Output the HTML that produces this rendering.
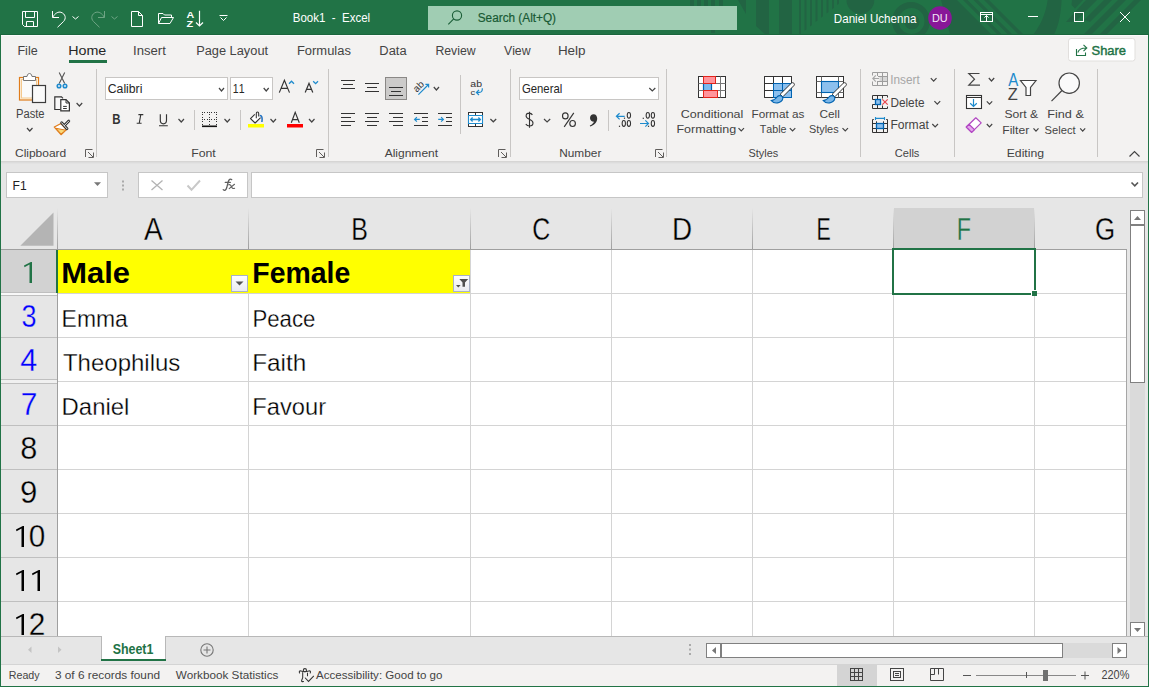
<!DOCTYPE html>
<html><head><meta charset="utf-8"><style>
html,body{margin:0;padding:0;width:1149px;height:687px;overflow:hidden;background:#f3f2f1;}
svg{display:block;}
text{font-family:"Liberation Sans",sans-serif;font-kerning:none;}
</style></head><body>
<svg width="1149" height="687" viewBox="0 0 1149 687">
<defs>
<linearGradient id="hsep" x1="0" y1="0" x2="0" y2="1"><stop offset="0" stop-color="#e6e6e6"/><stop offset="1" stop-color="#9f9f9f"/></linearGradient>
<linearGradient id="btn" x1="0" y1="0" x2="0" y2="1"><stop offset="0" stop-color="#ffffff"/><stop offset="1" stop-color="#e8eaf0"/></linearGradient>
</defs>
<rect x="0" y="0" width="1149" height="687" fill="#f3f2f1" />
<rect x="0" y="0" width="1149" height="35" fill="#217346" />
<rect x="0" y="35" width="1149" height="1" fill="#fbfbfb" />
<clipPath id="tb"><rect x="0" y="0" width="1149" height="34"/></clipPath>
<g fill="#226443" clip-path="url(#tb)">
<polygon points="738,0 746,0 746,14"/>
<polygon points="756,0 769,0 769,35 766,35 756,26"/>
<rect x="779" y="0" width="13" height="35" fill="#226443" />
<polygon points="799,0 801,0 801,33.5 799,35.0"/>
<polygon points="804.5,0 806.5,0 806.5,29.2 804.5,30.7"/>
<polygon points="810,0 812,0 812,24.9 810,26.4"/>
<polygon points="815.5,0 817.5,0 817.5,20.6 815.5,22.1"/>
<polygon points="821,0 823,0 823,16.3 821,17.8"/>
<polygon points="826.5,0 828.5,0 828.5,12.0 826.5,13.5"/>
<polygon points="832,0 834,0 834,7.700000000000003 832,9.200000000000003"/>
<polygon points="837,0 839,0 839,3.400000000000002 837,4.900000000000002"/>
<path d="M846.5,0 A13.8,13.8 0 0 0 874.3,0 Z"/>
<path d="M892,21 A19,19 0 1 1 930,21 A19,19 0 1 1 892,21 Z M898.5,21 A13,13 0 1 0 924.5,21 A13,13 0 1 0 898.5,21 Z" fill-rule="evenodd"/>
<circle cx="912" cy="22" r="7.5"/>
<polygon points="941,0 957,0 991,34 950,34"/>
<polygon points="963,0 967.5,0 1001.5,34 997,34"/>
<polygon points="973.5,0 978.0,0 1012.0,34 1007.5,34"/>
<polygon points="984,0 989,0 1023,34 1018,34"/>
<path d="M1047.6,0 H1061.6 C1061,14 1058.5,26 1053.8,35 H1033 C1040,26 1046,14 1047.6,0 Z"/>
<polygon points="1072,0 1083,0 1075,8.5 1071.5,5"/>
<polygon points="1086,0 1097,0 1077,20 1072,22 1066,22"/>
<polygon points="1104,0 1112,0 1090,22 1085,20 1083,21"/>
<polygon points="1118,0 1126,0 1092,34 1084,34"/>
<polygon points="1134,0 1141,0 1107,34 1100,34"/>
<rect x="690" y="0" width="4" height="6" fill="#226443" />
<rect x="697" y="0" width="4" height="6" fill="#226443" />
<rect x="704" y="0" width="4" height="6" fill="#226443" />
<rect x="711" y="0" width="4" height="6" fill="#226443" />
<rect x="719" y="0" width="4" height="6" fill="#226443" />
<rect x="711" y="29" width="4" height="4" fill="#226443" />
</g>
<rect x="0" y="34" width="1149" height="1" fill="#1b663d" />
<rect x="428" y="6" width="309" height="24" fill="#a0cdb3" />
<circle cx="457" cy="15.5" r="4.6" fill="none" stroke="#1b5e38" stroke-width="1.1"/>
<line x1="453.7" y1="18.8" x2="448.3" y2="24.3" stroke="#1b5e38" stroke-width="1.1"/>
<text x="477.76" y="21.8" font-size="12.65" fill="#185a34" textLength="78.27" lengthAdjust="spacingAndGlyphs" stroke="#185a34" stroke-width="0.2">Search (Alt+Q)</text>
<text x="292.76" y="21.8" font-size="12.65" fill="#ffffff" textLength="77.41" lengthAdjust="spacingAndGlyphs" >Book1  -  Excel</text>
<text x="833.80" y="22.9" font-size="12.35" fill="#ffffff" textLength="82.55" lengthAdjust="spacingAndGlyphs" >Daniel Uchenna</text>
<circle cx="940" cy="18" r="11.8" fill="#881798"/>
<text x="931.91" y="21.7" font-size="10.76" fill="#f3e6f5" textLength="15.73" lengthAdjust="spacingAndGlyphs" >DU</text>
<g fill="none" stroke="#ffffff" stroke-width="1">
<path d="M22.5,11.5 H37.5 V26.5 H24.5 L22.5,24.5 Z"/>
<path d="M25.5,11.5 V17.5 H34.5 V11.5"/>
<path d="M26.5,26.5 V21.5 H33.5 V26.5"/>
<path d="M52.5,11 V17.5 H59"/>
<path d="M52.8,17.2 C55,13 58.5,11.5 61,12.3 C65.5,13.8 66.5,18.5 63.5,21.5 L57.5,27.3"/>
<path d="M72.5,16.5 L75.5,19 L78.5,16.5"/>
</g>
<g fill="none" stroke="#6fa585" stroke-width="1">
<path d="M104.5,11 V17.5 H98"/>
<path d="M104.2,17.2 C102,13 98.5,11.5 96,12.3 C91.5,13.8 90.5,18.5 93.5,21.5 L99.5,27.3"/>
<path d="M111.5,16.5 L114.5,19 L117.5,16.5"/>
</g>
<g fill="none" stroke="#ffffff" stroke-width="1">
<path d="M131.5,11.5 H138.5 L142.5,15.5 V26.5 H131.5 Z M138.5,11.5 V15.5 H142.5"/>
<path d="M158.5,23.5 V13.5 H163 L164.5,15 H171.5 V17.5 M158.5,23.5 H170 L173.5,17.5 H161.5 L158.5,23.5"/>
<path d="M199.5,10.8 V26 M196,22.5 L199.5,26 L203,22.5" stroke-width="1.2"/>
<path d="M219.5,15.5 H227.5 M220.5,17.5 L223.5,20.5 L226.5,17.5"/>
</g>
<text x="186.53" y="17.6" font-size="8.43" fill="#ffffff" font-weight="bold" textLength="7.75" lengthAdjust="spacingAndGlyphs" >A</text>
<text x="186.48" y="26.5" font-size="8.43" fill="#ffffff" font-weight="bold" textLength="6.64" lengthAdjust="spacingAndGlyphs" >Z</text>
<g fill="none" stroke="#ffffff" stroke-width="1">
<rect x="980.5" y="12.5" width="12" height="9"/>
<path d="M980.5,14.5 H992.5 M986.5,21.5 V15.5 M984.4,17.6 L986.5,15.5 L988.6,17.6"/>
<path d="M1028,16.5 H1038"/>
<rect x="1074.5" y="12.5" width="9" height="9"/>
<path d="M1120,12 L1130,22 M1130,12 L1120,22"/>
</g>
<text x="17.47" y="55" font-size="13.52" fill="#444444" textLength="20.18" lengthAdjust="spacingAndGlyphs" >File</text>
<text x="68.23" y="55" font-size="13.52" fill="#262626" textLength="38.11" lengthAdjust="spacingAndGlyphs" >Home</text>
<text x="133.09" y="55" font-size="13.52" fill="#444444" textLength="32.81" lengthAdjust="spacingAndGlyphs" >Insert</text>
<text x="196.15" y="55" font-size="13.52" fill="#444444" textLength="71.94" lengthAdjust="spacingAndGlyphs" >Page Layout</text>
<text x="296.94" y="55" font-size="13.52" fill="#444444" textLength="53.93" lengthAdjust="spacingAndGlyphs" >Formulas</text>
<text x="379.34" y="55" font-size="13.52" fill="#444444" textLength="27.26" lengthAdjust="spacingAndGlyphs" >Data</text>
<text x="435.39" y="55" font-size="13.52" fill="#444444" textLength="40.18" lengthAdjust="spacingAndGlyphs" >Review</text>
<text x="503.95" y="55" font-size="13.52" fill="#444444" textLength="26.62" lengthAdjust="spacingAndGlyphs" >View</text>
<text x="557.90" y="55" font-size="13.52" fill="#444444" textLength="27.67" lengthAdjust="spacingAndGlyphs" >Help</text>
<rect x="69" y="60" width="38" height="3" fill="#217346" />
<rect x="1068.5" y="38.5" width="66.5" height="22.5" rx="2.5" fill="#ffffff" stroke="#e1dfdd"/>
<text x="1091.51" y="54.9" font-size="13.52" fill="#217346" textLength="34.56" lengthAdjust="spacingAndGlyphs" stroke="#217346" stroke-width="0.45">Share</text>
<g fill="none" stroke="#217346" stroke-width="1.1">
<path d="M1076.5,49 V55.5 H1085.5 V52.5"/>
<path d="M1077.8,52.5 C1078.8,49.5 1081,48 1085.8,48 M1083.5,44.8 L1086.8,48 L1083.5,51.2"/>
</g>
<rect x="1" y="161" width="1147" height="1" fill="#d6d5d4" />
<rect x="1" y="162" width="1147" height="1" fill="#dcdcdc" />
<rect x="1" y="163" width="1147" height="1" fill="#e2e2e2" />
<rect x="96" y="69" width="1" height="88" fill="#c8c6c4" />
<rect x="328" y="69" width="1" height="88" fill="#c8c6c4" />
<rect x="510" y="69" width="1" height="88" fill="#c8c6c4" />
<rect x="666" y="69" width="1" height="88" fill="#c8c6c4" />
<rect x="860" y="69" width="1" height="88" fill="#c8c6c4" />
<rect x="954" y="69" width="1" height="88" fill="#c8c6c4" />
<rect x="1097" y="69" width="1" height="88" fill="#c8c6c4" />
<text x="14.99" y="157" font-size="11.63" fill="#444444" textLength="51.28" lengthAdjust="spacingAndGlyphs" >Clipboard</text>
<text x="191.19" y="157" font-size="11.63" fill="#444444" textLength="24.60" lengthAdjust="spacingAndGlyphs" >Font</text>
<text x="384.68" y="157" font-size="11.63" fill="#444444" textLength="53.41" lengthAdjust="spacingAndGlyphs" >Alignment</text>
<text x="559.23" y="157" font-size="11.63" fill="#444444" textLength="42.17" lengthAdjust="spacingAndGlyphs" >Number</text>
<text x="748.50" y="157" font-size="11.63" fill="#444444" textLength="29.69" lengthAdjust="spacingAndGlyphs" >Styles</text>
<text x="894.74" y="157" font-size="11.63" fill="#444444" textLength="24.66" lengthAdjust="spacingAndGlyphs" >Cells</text>
<text x="1006.70" y="157" font-size="11.63" fill="#444444" textLength="37.39" lengthAdjust="spacingAndGlyphs" >Editing</text>
<path d="M85.5,157 V149.5 H92.5 M88,152 L93,157 M93.5,152.5 V157.5 H88.5" fill="none" stroke="#605e5c" stroke-width="1"/>
<path d="M316.5,157 V149.5 H323.5 M319,152 L324,157 M324.5,152.5 V157.5 H319.5" fill="none" stroke="#605e5c" stroke-width="1"/>
<path d="M498.5,157 V149.5 H505.5 M501,152 L506,157 M506.5,152.5 V157.5 H501.5" fill="none" stroke="#605e5c" stroke-width="1"/>
<path d="M655.5,157 V149.5 H662.5 M658,152 L663,157 M663.5,152.5 V157.5 H658.5" fill="none" stroke="#605e5c" stroke-width="1"/>
<path d="M1129.5,156.5 L1134.5,151.5 L1139.5,156.5" fill="none" stroke="#444" stroke-width="1.2"/>
<rect x="19.5" y="77.5" width="19" height="22.5" fill="#fdf6e8" stroke="#e07c1b" stroke-width="1.2"/>
<rect x="21.5" y="79.5" width="15" height="18.5" fill="#fbfbfb" stroke="#f4c98e" stroke-width="1"/>
<path d="M23.5,80.5 V76.5 H27 C27.5,74 28.5,73.5 29.5,73.5 C30.5,73.5 31.5,74 32,76.5 H35.5 V80.5 Z" fill="#ffffff" stroke="#757575" stroke-width="1"/>
<rect x="32.5" y="85.5" width="13" height="17" fill="#fafafa" stroke="#3c3c3c" stroke-width="1.2"/>
<text x="15.98" y="117.8" font-size="12.21" fill="#444444" textLength="28.62" lengthAdjust="spacingAndGlyphs" >Paste</text>
<path d="M27,128 L29.75,131 L32.5,128" fill="none" stroke="#444" stroke-width="1.2"/>
<g fill="none" stroke="#555" stroke-width="1.1"><path d="M59.2,72.4 L64.7,83.5 M64.7,72.4 L59.2,83.5"/></g>
<g fill="#d8e8f5" stroke="#1e8bcd" stroke-width="1.5"><circle cx="59" cy="86" r="1.8"/><circle cx="65" cy="86" r="1.8"/></g>
<path d="M60.5,109.5 H54.8 V96.8 H61.5 L63,98.3" fill="#f8f8f8" stroke="#333" stroke-width="1.2"/>
<path d="M60.8,110.8 V99.6 H66 L69.4,103 V110.8 Z" fill="#ffffff" stroke="#333" stroke-width="1.2"/>
<path d="M66,99.6 V103 H69.4 M63.1,106.4 H66.8 M63.1,108.5 H66.8" fill="none" stroke="#333" stroke-width="1"/>
<path d="M76.6,103 L79.39999999999999,106 L82.19999999999999,103" fill="none" stroke="#444" stroke-width="1.2"/>
<path d="M54.3,127 L61,123.5 L66.5,129.5 L61,134.7 Z" fill="#ffffff" stroke="#e07c1b" stroke-width="1.2" stroke-linejoin="round"/>
<path d="M56,128.3 L65.8,130.2 L61,134 Z" fill="#f9d97a" stroke="#e07c1b" stroke-width="1"/>
<path d="M61.6,122.8 L67,128.8 M64.3,125.6 L68.8,121" fill="none" stroke="#333" stroke-width="2.8" stroke-linecap="round"/>
<path d="M61.6,122.8 L67,128.8 M64.3,125.6 L68.8,121" fill="none" stroke="#ffffff" stroke-width="0.9" stroke-linecap="round"/>
<rect x="105.5" y="77.5" width="122" height="22" fill="#ffffff" stroke="#c8c6c4"/>
<text x="107.78" y="93" font-size="13.08" fill="#262626" textLength="34.64" lengthAdjust="spacingAndGlyphs" >Calibri</text>
<path d="M219,88 L221.5,91 L224,88" fill="none" stroke="#444" stroke-width="1.2"/>
<rect x="230.5" y="77.5" width="42" height="22" fill="#ffffff" stroke="#c8c6c4"/>
<text x="232.80" y="93" font-size="13.08" fill="#262626" textLength="11.72" lengthAdjust="spacingAndGlyphs" >11</text>
<path d="M263.7,88 L266.2,91 L268.7,88" fill="none" stroke="#444" stroke-width="1.2"/>
<path d="M279.3,92.6 L284.4,80.2 L289.5,92.6 M281.2,88.3 H287.6" fill="none" stroke="#333" stroke-width="1.15"/>
<path d="M289,83.8 L291.5,81.2 L294,83.8" fill="none" stroke="#1e8bcd" stroke-width="1.3"/>
<path d="M305.2,92.6 L309,83.3 L312.8,92.6 M306.6,89.4 H311.4" fill="none" stroke="#333" stroke-width="1.2"/>
<path d="M313.2,81.2 L315.6,83.6 L318,81.2" fill="none" stroke="#1e8bcd" stroke-width="1.3"/>
<text x="112.13" y="123.7" font-size="14.39" fill="#333" font-weight="bold" textLength="8.29" lengthAdjust="spacingAndGlyphs" >B</text>
<path d="M138.4,114.6 H143.3 M136.7,123.3 H141.6 M140.8,114.6 L139.2,123.3" fill="none" stroke="#333" stroke-width="1.1"/>
<path d="M160.3,114.2 V120.3 C160.3,122.7 161.8,123.8 163.4,123.8 C165,123.8 166.5,122.7 166.5,120.3 V114.2 M159,125.7 H167.8" fill="none" stroke="#333" stroke-width="1.15"/>
<path d="M178.5,119 L181.25,122 L184.0,119" fill="none" stroke="#444" stroke-width="1.2"/>
<rect x="194" y="110" width="1" height="20" fill="#c8c6c4" />
<rect x="204" y="119" width="1" height="1" fill="#333" />
<rect x="209" y="112" width="1" height="1" fill="#333" />
<rect x="211" y="112" width="1" height="1" fill="#333" />
<rect x="209" y="121" width="1" height="1" fill="#333" />
<rect x="209" y="124" width="1" height="1" fill="#333" />
<rect x="202" y="112" width="1" height="1" fill="#333" />
<rect x="216" y="114" width="1" height="1" fill="#333" />
<rect x="202" y="121" width="1" height="1" fill="#333" />
<rect x="216" y="117" width="1" height="1" fill="#333" />
<rect x="202" y="124" width="1" height="1" fill="#333" />
<rect x="204" y="112" width="1" height="1" fill="#333" />
<rect x="214" y="119" width="1" height="1" fill="#333" />
<rect x="209" y="114" width="1" height="1" fill="#333" />
<rect x="209" y="117" width="1" height="1" fill="#333" />
<rect x="202" y="114" width="1" height="1" fill="#333" />
<rect x="202" y="117" width="1" height="1" fill="#333" />
<rect x="216" y="119" width="1" height="1" fill="#333" />
<rect x="207" y="119" width="1" height="1" fill="#333" />
<rect x="214" y="112" width="1" height="1" fill="#333" />
<rect x="216" y="121" width="1" height="1" fill="#333" />
<rect x="209" y="119" width="1" height="1" fill="#333" />
<rect x="211" y="119" width="1" height="1" fill="#333" />
<rect x="202" y="119" width="1" height="1" fill="#333" />
<rect x="216" y="112" width="1" height="1" fill="#333" />
<rect x="207" y="112" width="1" height="1" fill="#333" />
<rect x="216" y="124" width="1" height="1" fill="#333" />
<rect x="202" y="125.5" width="15" height="1.6" fill="#111" />
<path d="M224.5,119 L227.25,122 L230.0,119" fill="none" stroke="#444" stroke-width="1.2"/>
<rect x="240" y="110" width="1" height="20" fill="#c8c6c4" />
<path d="M254.8,114.3 L250.5,118.6 L255.1,123 L260.6,117.6" fill="#ffffff" stroke="#333" stroke-width="1.1" stroke-linejoin="round"/>
<path d="M256.3,118.2 V113.4 C256.3,111.6 258.7,111.6 258.7,113.4 V116.5" fill="none" stroke="#333" stroke-width="1.05"/>
<path d="M259.8,115.5 C261.8,115.3 262.6,117.8 261.9,122" fill="none" stroke="#1e6fc0" stroke-width="1.5"/>
<rect x="248" y="124" width="16" height="3.5" fill="#ffff00" />
<path d="M270.5,119 L273.25,122 L276.0,119" fill="none" stroke="#444" stroke-width="1.2"/>
<path d="M291.3,122.8 L295.2,112.4 L299.3,122.8 M292.6,119.6 H297.9" fill="none" stroke="#333" stroke-width="1.15"/>
<rect x="287" y="124" width="16" height="3.5" fill="#ff0000" />
<path d="M309,119 L311.75,122 L314.5,119" fill="none" stroke="#444" stroke-width="1.2"/>
<rect x="341" y="80" width="14" height="1" fill="#333" />
<rect x="343" y="84" width="10" height="1" fill="#333" />
<rect x="341" y="88" width="14" height="1" fill="#333" />
<rect x="365" y="83" width="14" height="1" fill="#333" />
<rect x="367" y="87" width="10" height="1" fill="#333" />
<rect x="365" y="91" width="14" height="1" fill="#333" />
<rect x="385.5" y="77.5" width="21" height="22" fill="#cccbca" stroke="#8a8886"/>
<rect x="389" y="87" width="14" height="1" fill="#333" />
<rect x="391" y="91" width="10" height="1" fill="#333" />
<rect x="389" y="95" width="14" height="1" fill="#333" />
<g transform="translate(418.3,86.3) rotate(-45)"><text x="-5.6" y="3.4" font-size="9.6" fill="#333" textLength="11.2" lengthAdjust="spacingAndGlyphs">ab</text></g>
<path d="M418.4,94.6 L428.5,84.5 M425.4,84.4 H428.6 V87.6" fill="none" stroke="#1e8bcd" stroke-width="1.2"/>
<path d="M433.8,87 L436.40000000000003,90 L439.0,87" fill="none" stroke="#444" stroke-width="1.2"/>
<rect x="460" y="75" width="1" height="59" fill="#c8c6c4" />
<text x="470.35" y="87.3" font-size="8.14" fill="#333" textLength="11.69" lengthAdjust="spacingAndGlyphs" >ab</text>
<text x="470.41" y="94.8" font-size="6.40" fill="#333" textLength="4.64" lengthAdjust="spacingAndGlyphs" >c</text>
<path d="M476.6,92.4 H479.5 C481.5,92.4 482.5,90.8 482.3,88.3 M479,89.8 L476.4,92.4 L479,95" fill="none" stroke="#1e8bcd" stroke-width="1.2"/>
<rect x="341" y="113" width="14" height="1" fill="#333" />
<rect x="341" y="117" width="10" height="1" fill="#333" />
<rect x="341" y="121" width="14" height="1" fill="#333" />
<rect x="341" y="125" width="10" height="1" fill="#333" />
<rect x="365" y="113" width="14" height="1" fill="#333" />
<rect x="367" y="117" width="10" height="1" fill="#333" />
<rect x="365" y="121" width="14" height="1" fill="#333" />
<rect x="367" y="125" width="10" height="1" fill="#333" />
<rect x="389" y="113" width="14" height="1" fill="#333" />
<rect x="393" y="117" width="10" height="1" fill="#333" />
<rect x="389" y="121" width="14" height="1" fill="#333" />
<rect x="393" y="125" width="10" height="1" fill="#333" />
<rect x="414" y="113" width="14" height="1" fill="#333" />
<rect x="422" y="117" width="6" height="1" fill="#333" />
<rect x="422" y="121" width="6" height="1" fill="#333" />
<rect x="414" y="125" width="14" height="1" fill="#333" />
<path d="M419.8,119.4 H414.6 M416.9,117.1 L414.6,119.4 L416.9,121.7" fill="none" stroke="#1e8bcd" stroke-width="1.2"/>
<rect x="438" y="113" width="14" height="1" fill="#333" />
<rect x="446" y="117" width="6" height="1" fill="#333" />
<rect x="446" y="121" width="6" height="1" fill="#333" />
<rect x="438" y="125" width="14" height="1" fill="#333" />
<path d="M438.2,119.4 H443.4 M441.1,117.1 L443.4,119.4 L441.1,121.7" fill="none" stroke="#1e8bcd" stroke-width="1.2"/>
<rect x="468.5" y="112.5" width="14" height="14" fill="#ffffff" stroke="#333"/>
<path d="M475.5,112.5 V115.5 M475.5,123.5 V126.5" fill="none" stroke="#333"/>
<path d="M468.5,115.5 H482.5 V123.5 H468.5 Z" fill="#ffffff" stroke="#1e8bcd" stroke-width="1.1"/>
<path d="M470.6,119.5 H480.4 M472.6,117.5 L470.6,119.5 L472.6,121.5 M478.4,117.5 L480.4,119.5 L478.4,121.5" fill="none" stroke="#1e8bcd" stroke-width="1.3"/>
<path d="M490.4,119 L493.29999999999995,121.8 L496.2,119" fill="none" stroke="#444" stroke-width="1.2"/>
<rect x="519.5" y="77.5" width="139" height="22" fill="#ffffff" stroke="#c8c6c4"/>
<text x="521.93" y="92.7" font-size="12.79" fill="#262626" textLength="40.33" lengthAdjust="spacingAndGlyphs" >General</text>
<path d="M649.3,88 L652.3,91 L655.3,88" fill="none" stroke="#444" stroke-width="1.2"/>
<path d="M532.4,114.9 C531.6,113.6 530.6,113.1 529.3,113.1 C527.3,113.1 526.1,114.3 526.1,115.9 C526.1,119.6 533,118.9 533,123 C533,124.8 531.6,126 529.5,126 C527.8,126 526.6,125.3 525.8,124 M529.5,111.8 V127.8" fill="none" stroke="#333" stroke-width="1.1"/>
<path d="M544,119 L547.1,122 L550.2,119" fill="none" stroke="#444" stroke-width="1.2"/>
<g fill="none" stroke="#333" stroke-width="1.15"><ellipse cx="565.3" cy="115.9" rx="2.8" ry="3"/><ellipse cx="572.6" cy="123.5" rx="2.8" ry="3"/><path d="M573.8,112.8 L564.2,126.8"/></g>
<path d="M593.5,114.2 C596,114.2 597.2,116.2 597.2,118.5 C597.2,122.5 594,125.3 590.2,126.5 L589.8,125.6 C592.3,124.5 593.8,122.8 594,121.8 C591.8,121.8 590,120.3 590,118 C590,115.8 591.5,114.2 593.5,114.2 Z" fill="#333"/>
<rect x="608" y="110" width="1" height="21" fill="#c8c6c4" />
<ellipse cx="628.9" cy="115.3" rx="1.65" ry="2.9" fill="none" stroke="#333" stroke-width="1.05"/>
<rect x="623.9" y="117.60000000000001" width="1.2" height="1.2" fill="#333" />
<ellipse cx="623.8" cy="123.45" rx="1.65" ry="2.9" fill="none" stroke="#333" stroke-width="1.05"/>
<ellipse cx="628.9" cy="123.45" rx="1.65" ry="2.9" fill="none" stroke="#333" stroke-width="1.05"/>
<rect x="618.9" y="125.7" width="1.2" height="1.2" fill="#333" />
<path d="M624.7,116.3 H616.5 M619.6,113.2 L616.4,116.3 L619.6,119.4" fill="none" stroke="#1e8bcd" stroke-width="1.2"/>
<ellipse cx="647.8" cy="115.3" rx="1.65" ry="2.9" fill="none" stroke="#333" stroke-width="1.05"/>
<ellipse cx="652.9" cy="115.3" rx="1.65" ry="2.9" fill="none" stroke="#333" stroke-width="1.05"/>
<rect x="642.6999999999999" y="117.7" width="1.2" height="1.2" fill="#333" />
<ellipse cx="652.9" cy="123.45" rx="1.65" ry="2.9" fill="none" stroke="#333" stroke-width="1.05"/>
<rect x="647.9" y="125.7" width="1.2" height="1.2" fill="#333" />
<path d="M640,123.5 H648.4 M645.3,120.4 L648.5,123.5 L645.3,126.6" fill="none" stroke="#1e8bcd" stroke-width="1.2"/>
<rect x="698.5" y="76.5" width="27" height="21" fill="#ffffff" stroke="#333"/>
<path d="M698.5,83.5 H725.5 M698.5,90.5 H725.5 M720.5,76.5 V97.5" fill="none" stroke="#777"/>
<rect x="703.5" y="76.5" width="12" height="7" fill="#ff959c" stroke="#e3241b"/>
<rect x="703.5" y="90.5" width="14" height="7" fill="#ff959c" stroke="#e3241b"/>
<rect x="703.5" y="84" width="8" height="6" fill="#7dbbee"/>
<path d="M703.5,84 V90 M711.5,84 V90" stroke="#0063b1" stroke-width="1.2"/>
<path d="M773.5,97.5 H764.5 V76.5 H791.5 V83.5" fill="#ffffff" stroke="#333"/>
<rect x="765" y="77" width="26" height="6.5" fill="#ffffff" />
<rect x="765" y="83" width="8" height="14" fill="#ffffff" />
<path d="M764.5,76.5 H791.5 V83.5 M764.5,76.5 V97.5 H773.5 M764.5,83.5 H773.5 M764.5,90.5 H773.5 M773.5,76.5 V83.5 M782.5,76.5 V83.5" fill="none" stroke="#333"/>
<rect x="773.5" y="83.5" width="18" height="14" fill="#8cc0ee" stroke="#0063b1"/>
<path d="M773.5,90.5 H791.5 M782.5,83.5 V97.5" fill="none" stroke="#0063b1"/>
<path d="M793.8,83.2 C794.8,84.2 794.5,85 793.5,86 L782.8,96.8 L780.2,94.2 L791,83.5 C792,82.5 793,82.4 793.8,83.2 Z" fill="#ffffff" stroke="#333" stroke-width="1"/>
<path d="M771.3,100.6 C774,100.3 776,98.5 777.5,96.5 C779,95 781.5,95.5 782.5,97 C783.5,99 782,101.5 779,102.5 C776,103.5 773,102.5 771.3,100.6 Z" fill="#79b6e8" stroke="#0063b1" stroke-width="1.1"/>
<rect x="816.5" y="76.5" width="27" height="21" fill="#ffffff" stroke="#333"/>
<path d="M816.5,81.5 H843.5 M816.5,92.5 H843.5 M821.5,76.5 V97.5 M838.5,76.5 V97.5" fill="none" stroke="#666"/>
<rect x="821.5" y="81.5" width="17" height="11" fill="#8cc0ee" stroke="#0063b1" stroke-width="1.1"/>
<path d="M845.8,83.2 C846.8,84.2 846.5,85 845.5,86 L834.8,96.8 L832.2,94.2 L843,83.5 C844,82.5 845,82.4 845.8,83.2 Z" fill="#ffffff" stroke="#333" stroke-width="1"/>
<path d="M823.3,100.6 C826,100.3 828,98.5 829.5,96.5 C831,95 833.5,95.5 834.5,97 C835.5,99 834,101.5 831,102.5 C828,103.5 825,102.5 823.3,100.6 Z" fill="#79b6e8" stroke="#0063b1" stroke-width="1.1"/>
<text x="680.87" y="117.6" font-size="11.63" fill="#444444" textLength="62.47" lengthAdjust="spacingAndGlyphs" >Conditional</text>
<text x="676.47" y="133.3" font-size="11.63" fill="#444444" textLength="59.83" lengthAdjust="spacingAndGlyphs" >Formatting</text>
<path d="M738.5,128.2 L741.25,131.0 L744.0,128.2" fill="none" stroke="#444" stroke-width="1.2"/>
<text x="751.54" y="117.6" font-size="11.63" fill="#444444" textLength="52.79" lengthAdjust="spacingAndGlyphs" >Format as</text>
<text x="759.76" y="133.3" font-size="11.63" fill="#444444" textLength="26.71" lengthAdjust="spacingAndGlyphs" >Table</text>
<path d="M789.8,128.2 L792.55,131.0 L795.3,128.2" fill="none" stroke="#444" stroke-width="1.2"/>
<text x="819.40" y="117.6" font-size="11.63" fill="#444444" textLength="20.39" lengthAdjust="spacingAndGlyphs" >Cell</text>
<text x="809.01" y="133.3" font-size="11.63" fill="#444444" textLength="29.59" lengthAdjust="spacingAndGlyphs" >Styles</text>
<path d="M842.5,128.2 L845.25,131.0 L848.0,128.2" fill="none" stroke="#444" stroke-width="1.2"/>
<rect x="879.5" y="76.5" width="8" height="5" fill="#d6d6d6" />
<path d="M872.5,75.5 V72.5 H887.5 V85.5 H872.5 V81.5 M877.5,72.5 V76 M877.5,81 V85.5 M882.5,72.5 V85.5 M878,76.5 H887.5 M878,81.5 H887.5" fill="none" stroke="#9d9d9d" stroke-width="1"/>
<path d="M879,78.5 H873 M875.8,75.3 L872.8,78.5 L875.8,81.7" fill="none" stroke="#a6a6a6" stroke-width="1.1"/>
<text x="890.31" y="83.7" font-size="12.21" fill="#a6a6a6" textLength="29.47" lengthAdjust="spacingAndGlyphs" >Insert</text>
<path d="M930.8,78.2 L933.65,81.2 L936.5,78.2" fill="none" stroke="#444" stroke-width="1.2"/>
<path d="M872.5,99.5 V95.5 H887.5 V97.5 M872.5,99.5 H875 M872.5,104.5 V108.5 H887.5 V106.5 M872.5,104.5 H875 M877.5,95.5 V99 M882.5,95.5 V98.5 M877.5,105 V108.5 M882.5,105.5 V108.5" fill="none" stroke="#333" stroke-width="1"/>
<rect x="875.5" y="99.5" width="5" height="5" fill="#8cc0ee" stroke="#0063b1" stroke-width="1.3"/>
<path d="M882.3,99.3 L887.7,104.7 M887.7,99.3 L882.3,104.7" stroke="#e8474f" stroke-width="1.2"/>
<text x="890.43" y="106.8" font-size="12.21" fill="#444444" textLength="34.09" lengthAdjust="spacingAndGlyphs" >Delete</text>
<path d="M934.4,101.2 L937.3,104.2 L940.1999999999999,101.2" fill="none" stroke="#444" stroke-width="1.2"/>
<path d="M873.8,119.5 H872.5 V132.5 H887.5 V119.5 H886.2 M872.5,123.5 H887.5 M872.5,128.5 H887.5 M876.5,121.3 V132.5 M883.5,121.3 V132.5" fill="none" stroke="#333" stroke-width="1"/>
<path d="M875.5,118.4 H884.5 M875.5,117 V120 M884.5,117 V120" fill="none" stroke="#1e8bcd" stroke-width="1.1"/>
<rect x="876.5" y="123.5" width="7" height="5" fill="#8cc0ee" stroke="#0063b1" stroke-width="1.3"/>
<text x="890.41" y="129.3" font-size="12.21" fill="#444444" textLength="38.38" lengthAdjust="spacingAndGlyphs" >Format</text>
<path d="M932.3,124 L935.15,127 L938.0,124" fill="none" stroke="#444" stroke-width="1.2"/>
<path d="M979.5,73.5 H968.8 L974.5,79.2 L968.8,85.2 H980" fill="none" stroke="#444" stroke-width="1.2"/>
<path d="M988.8,78 L991.5,81 L994.1999999999999,78" fill="none" stroke="#444" stroke-width="1.2"/>
<rect x="966.5" y="95.5" width="15" height="13" fill="#ffffff" stroke="#333" stroke-width="1.1"/>
<rect x="967" y="97" width="14" height="1" fill="#333" />
<path d="M973.5,99 V106.2 M970.2,103.3 L973.5,106.5 L976.8,103.3" fill="none" stroke="#1e8bcd" stroke-width="1.2"/>
<path d="M986.8,101.3 L989.5,104.1 L992.1999999999999,101.3" fill="none" stroke="#444" stroke-width="1.2"/>
<path d="M975.8,117.8 L981.2,122.9 L971.6,132.4 L966.3,127 Z" fill="#ffffff" stroke="#b146c2" stroke-width="1.2" stroke-linejoin="round"/>
<path d="M969,124.3 L974.5,129.6 L971.6,132.4 L966.3,127 Z" fill="#e3a5ec" stroke="#b146c2" stroke-width="1.2" stroke-linejoin="round"/>
<path d="M986.8,124 L989.5,126.8 L992.1999999999999,124" fill="none" stroke="#444" stroke-width="1.2"/>
<text x="1008.17" y="86" font-size="17.44" fill="#1e8bcd" textLength="10.06" lengthAdjust="spacingAndGlyphs" >A</text>
<text x="1007.68" y="99.6" font-size="15.99" fill="#444" textLength="10.03" lengthAdjust="spacingAndGlyphs" >Z</text>
<path d="M1020.5,80.5 H1036 L1030.5,87.5 V95.5 H1026 V87.5 Z" fill="#ffffff" stroke="#444" stroke-width="1.2"/>
<text x="1004.45" y="117.8" font-size="11.63" fill="#444444" textLength="33.74" lengthAdjust="spacingAndGlyphs" >Sort &amp;</text>
<text x="1002.31" y="133.8" font-size="11.63" fill="#444444" textLength="26.89" lengthAdjust="spacingAndGlyphs" >Filter</text>
<path d="M1033.5,128.3 L1036.0,131.10000000000002 L1038.5,128.3" fill="none" stroke="#444" stroke-width="1.2"/>
<circle cx="1069.2" cy="83.2" r="10.2" fill="#fafafa" stroke="#444" stroke-width="1.2"/>
<path d="M1062,90.5 L1051.5,101.2" stroke="#444" stroke-width="1.2"/>
<text x="1047.16" y="117.8" font-size="11.63" fill="#444444" textLength="36.74" lengthAdjust="spacingAndGlyphs" >Find &amp;</text>
<text x="1044.59" y="133.8" font-size="11.63" fill="#444444" textLength="30.99" lengthAdjust="spacingAndGlyphs" >Select</text>
<path d="M1080.2,128.3 L1082.7,131.10000000000002 L1085.2,128.3" fill="none" stroke="#444" stroke-width="1.2"/>
<rect x="1" y="164" width="1147" height="472" fill="#e6e6e6" />
<rect x="6.5" y="172.5" width="101" height="25" fill="#ffffff" stroke="#c6c6c6"/>
<text x="12.61" y="190" font-size="13.08" fill="#222" textLength="14.08" lengthAdjust="spacingAndGlyphs" >F1</text>
<path d="M94,182.3 H101 L97.5,186 Z" fill="#777"/>
<rect x="122" y="180.5" width="2" height="2" fill="#aaa" />
<rect x="122" y="184.5" width="2" height="2" fill="#aaa" />
<rect x="122" y="188.5" width="2" height="2" fill="#aaa" />
<rect x="138.5" y="172.5" width="109" height="25" fill="#ffffff" stroke="#c6c6c6"/>
<path d="M151.5,180.5 L162.5,190 M162.5,180.5 L151.5,190" stroke="#b3b3b3" stroke-width="1.3"/>
<path d="M187.5,185.5 L191.5,189.8 L200,180.5" fill="none" stroke="#c8c8c8" stroke-width="2"/>
<path d="M223.2,189.6 C224.6,191 226,190.2 226.7,187.8 L228.3,181.5 C228.9,179.2 230.3,178.6 231.7,179.6 M225.3,182.4 H230.3" fill="none" stroke="#5f5f5f" stroke-width="1.3" stroke-linecap="round"/>
<path d="M228.7,184.8 C230.2,184 231,185.5 231.6,187 C232.2,188.5 233.3,188.8 234.6,188.2 M234.5,184.3 L229.2,188.6" fill="none" stroke="#5f5f5f" stroke-width="1.1" stroke-linecap="round"/>
<rect x="251.5" y="172.5" width="891" height="25" fill="#ffffff" stroke="#c6c6c6"/>
<path d="M1131.5,182.5 L1134.8,185.8 L1138,182.5" fill="none" stroke="#555" stroke-width="1.6"/>
<rect x="893" y="208" width="141" height="41" fill="#d2d2d2" />
<polygon points="53.5,212.5 53.5,245.8 20.3,245.8" fill="#b4b4b4"/>
<rect x="248" y="208" width="1" height="41" fill="url(#hsep)"/>
<rect x="470" y="208" width="1" height="41" fill="url(#hsep)"/>
<rect x="611" y="208" width="1" height="41" fill="url(#hsep)"/>
<rect x="752" y="208" width="1" height="41" fill="url(#hsep)"/>
<rect x="893" y="208" width="1" height="41" fill="url(#hsep)"/>
<rect x="1034" y="208" width="1" height="41" fill="url(#hsep)"/>
<rect x="57" y="208" width="1" height="41" fill="url(#hsep)"/>
<rect x="1" y="249" width="1126" height="1" fill="#9f9f9f" />
<text x="144.05" y="239.8" font-size="30.52" fill="#000" textLength="18.71" lengthAdjust="spacingAndGlyphs" stroke="#e6e6e6" stroke-width="0.3">A</text>
<text x="351.15" y="239.8" font-size="30.52" fill="#000" textLength="16.67" lengthAdjust="spacingAndGlyphs" stroke="#e6e6e6" stroke-width="0.3">B</text>
<text x="532.23" y="239.8" font-size="30.52" fill="#000" textLength="18.02" lengthAdjust="spacingAndGlyphs" stroke="#e6e6e6" stroke-width="0.3">C</text>
<text x="672.01" y="239.8" font-size="30.52" fill="#000" textLength="20.12" lengthAdjust="spacingAndGlyphs" stroke="#e6e6e6" stroke-width="0.3">D</text>
<text x="816.54" y="239.8" font-size="30.52" fill="#000" textLength="14.28" lengthAdjust="spacingAndGlyphs" stroke="#e6e6e6" stroke-width="0.3">E</text>
<text x="956.69" y="239.8" font-size="30.52" fill="#217346" textLength="14.25" lengthAdjust="spacingAndGlyphs" stroke="#d2d2d2" stroke-width="0.3">F</text>
<text x="1095.00" y="239.8" font-size="30.52" fill="#000" textLength="20.14" lengthAdjust="spacingAndGlyphs" stroke="#e6e6e6" stroke-width="0.3">G</text>
<rect x="58" y="250" width="1068" height="386" fill="#ffffff" />
<rect x="1" y="250" width="56" height="42" fill="#d2d2d2" />
<rect x="58" y="293" width="1068" height="1" fill="#d4d4d4" />
<rect x="1" y="293" width="56" height="1" fill="#bfbfbf" />
<rect x="58" y="337" width="1068" height="1" fill="#d4d4d4" />
<rect x="1" y="337" width="56" height="1" fill="#bfbfbf" />
<rect x="58" y="381" width="1068" height="1" fill="#d4d4d4" />
<rect x="1" y="381" width="56" height="1" fill="#bfbfbf" />
<rect x="58" y="425" width="1068" height="1" fill="#d4d4d4" />
<rect x="1" y="425" width="56" height="1" fill="#bfbfbf" />
<rect x="58" y="469" width="1068" height="1" fill="#d4d4d4" />
<rect x="1" y="469" width="56" height="1" fill="#bfbfbf" />
<rect x="58" y="513" width="1068" height="1" fill="#d4d4d4" />
<rect x="1" y="513" width="56" height="1" fill="#bfbfbf" />
<rect x="58" y="557" width="1068" height="1" fill="#d4d4d4" />
<rect x="1" y="557" width="56" height="1" fill="#bfbfbf" />
<rect x="58" y="601" width="1068" height="1" fill="#d4d4d4" />
<rect x="1" y="601" width="56" height="1" fill="#bfbfbf" />
<rect x="1" y="292" width="56" height="1" fill="#bfbfbf" />
<rect x="1" y="293" width="56" height="2" fill="#f8f8f8" />
<rect x="1" y="295" width="56" height="1" fill="#bfbfbf" />
<rect x="1" y="379" width="56" height="1" fill="#bfbfbf" />
<rect x="1" y="380" width="56" height="3" fill="#f0f0f0" />
<rect x="1" y="383" width="56" height="1" fill="#bfbfbf" />
<rect x="248" y="250" width="1" height="386" fill="#d4d4d4" />
<rect x="470" y="250" width="1" height="386" fill="#d4d4d4" />
<rect x="611" y="250" width="1" height="386" fill="#d4d4d4" />
<rect x="752" y="250" width="1" height="386" fill="#d4d4d4" />
<rect x="893" y="250" width="1" height="386" fill="#d4d4d4" />
<rect x="1034" y="250" width="1" height="386" fill="#d4d4d4" />
<rect x="1126" y="250" width="1" height="387" fill="#a6a6a6" />
<rect x="58" y="250" width="412" height="43" fill="#ffff00" />
<rect x="248" y="250" width="1" height="43" fill="#ffff00" />
<path d="M29.5,283 V264.4 L24.5,267.2 L24,265.6 L30.8,262 H32 V283 Z" fill="#217346"/>
<text x="21.47" y="327" font-size="30.81" fill="#0000ff" textLength="15.01" lengthAdjust="spacingAndGlyphs" stroke="#e6e6e6" stroke-width="0.3">3</text>
<text x="20.30" y="371" font-size="30.81" fill="#0000ff" textLength="17.00" lengthAdjust="spacingAndGlyphs" stroke="#e6e6e6" stroke-width="0.3">4</text>
<text x="20.67" y="415" font-size="30.81" fill="#0000ff" textLength="16.64" lengthAdjust="spacingAndGlyphs" stroke="#e6e6e6" stroke-width="0.3">7</text>
<text x="20.27" y="459" font-size="30.81" fill="#000" textLength="17.07" lengthAdjust="spacingAndGlyphs" stroke="#e6e6e6" stroke-width="0.3">8</text>
<text x="20.14" y="503" font-size="30.81" fill="#000" textLength="17.34" lengthAdjust="spacingAndGlyphs" stroke="#e6e6e6" stroke-width="0.3">9</text>
<path d="M21.5,547 V528.4 L16.5,531.2 L16,529.6 L22.8,526 H24 V547 Z" fill="#000"/>
<text x="28.84" y="547" font-size="30.81" fill="#000" textLength="16.52" lengthAdjust="spacingAndGlyphs" stroke="#e6e6e6" stroke-width="0.3">0</text>
<path d="M21.5,591 V572.4 L16.5,575.2 L16,573.6 L22.8,570 H24 V591 Z" fill="#000"/>
<path d="M37.5,591 V572.4 L32.5,575.2 L32,573.6 L38.8,570 H40 V591 Z" fill="#000"/>
<path d="M21.5,635 V616.4 L16.5,619.2 L16,617.6 L22.8,614 H24 V635 Z" fill="#000"/>
<text x="28.80" y="635" font-size="30.81" fill="#000" textLength="16.60" lengthAdjust="spacingAndGlyphs" stroke="#e6e6e6" stroke-width="0.3">2</text>
<rect x="56" y="250" width="2" height="43" fill="#217346" />
<rect x="57" y="293" width="1" height="343" fill="#9f9f9f" />
<text x="61.33" y="282.7" font-size="29.80" fill="#000" font-weight="bold" textLength="68.72" lengthAdjust="spacingAndGlyphs" >Male</text>
<text x="252.30" y="282.7" font-size="29.80" fill="#000" font-weight="bold" textLength="97.97" lengthAdjust="spacingAndGlyphs" >Female</text>
<text x="61.62" y="326.9" font-size="23.26" fill="#000" textLength="66.18" lengthAdjust="spacingAndGlyphs" stroke="#ffffff" stroke-width="0.3">Emma</text>
<text x="62.96" y="371" font-size="23.26" fill="#000" textLength="117.41" lengthAdjust="spacingAndGlyphs" stroke="#ffffff" stroke-width="0.3">Theophilus</text>
<text x="61.54" y="414.5" font-size="23.26" fill="#000" textLength="67.87" lengthAdjust="spacingAndGlyphs" stroke="#ffffff" stroke-width="0.3">Daniel</text>
<text x="252.38" y="327.3" font-size="23.26" fill="#000" textLength="63.01" lengthAdjust="spacingAndGlyphs" stroke="#ffffff" stroke-width="0.3">Peace</text>
<text x="252.20" y="371" font-size="23.26" fill="#000" textLength="54.07" lengthAdjust="spacingAndGlyphs" stroke="#ffffff" stroke-width="0.3">Faith</text>
<text x="252.25" y="414.5" font-size="23.26" fill="#000" textLength="73.84" lengthAdjust="spacingAndGlyphs" stroke="#ffffff" stroke-width="0.3">Favour</text>
<rect x="231.5" y="275.5" width="16" height="16" fill="url(#btn)" stroke="#a9b2c7"/>
<rect x="453.5" y="275.5" width="16" height="16" fill="url(#btn)" stroke="#a9b2c7"/>
<path d="M235.5,281.5 H243.5 L239.5,285.5 Z" fill="#555"/>
<path d="M459.3,279 H468.2 L465,282.6 V286.8 H462.5 V282.6 Z" fill="#505050"/>
<path d="M456,285 H460.6 L458.3,287.6 Z" fill="#505050"/>
<rect x="893" y="249" width="142" height="45" fill="none" stroke="#217346" stroke-width="2"/>
<rect x="1031" y="290" width="6" height="6" fill="#ffffff" />
<rect x="1032" y="291" width="5" height="5" fill="#217346" />
<rect x="1127" y="208" width="21" height="428" fill="#e6e6e6" />
<rect x="1130" y="225" width="15" height="397" fill="#dadada" />
<rect x="1130.5" y="210.5" width="14" height="14" fill="#ffffff" stroke="#808080"/>
<path d="M1134,220 H1141 L1137.5,216 Z" fill="#777"/>
<rect x="1130.5" y="225.5" width="14" height="157" fill="#ffffff" stroke="#808080"/>
<rect x="1131" y="224" width="13" height="2" fill="#808080" />
<rect x="1130.5" y="622.5" width="14" height="14" fill="#ffffff" stroke="#808080"/>
<path d="M1134,628 H1141 L1137.5,632 Z" fill="#777"/>
<rect x="1" y="636" width="1147" height="28" fill="#e6e6e6" />
<rect x="1" y="636" width="1147" height="1" fill="#b8b8b8" />
<path d="M31.5,646.5 V653 L28,649.75 Z" fill="#c4c4c4"/>
<path d="M58,646.5 V653 L61.5,649.75 Z" fill="#c4c4c4"/>
<rect x="101" y="636" width="65" height="25" fill="#ffffff" />
<rect x="101" y="636" width="1" height="25" fill="#b8b8b8" />
<rect x="165" y="636" width="1" height="25" fill="#b8b8b8" />
<rect x="101" y="659" width="65" height="2" fill="#217346" />
<rect x="1" y="636" width="1147" height="1" fill="#b8b8b8" />
<rect x="102" y="636" width="63" height="1" fill="#ffffff" />
<text x="112.64" y="654" font-size="13.95" fill="#217346" font-weight="bold" textLength="40.70" lengthAdjust="spacingAndGlyphs" >Sheet1</text>
<circle cx="207" cy="650" r="6.2" fill="none" stroke="#777" stroke-width="1.1"/>
<path d="M203.5,650 H210.5 M207,646.5 V653.5" stroke="#777" stroke-width="1.1"/>
<rect x="689" y="644" width="2" height="2" fill="#aaa" />
<rect x="689" y="648.5" width="2" height="2" fill="#aaa" />
<rect x="689" y="653" width="2" height="2" fill="#aaa" />
<rect x="721" y="643" width="391" height="15" fill="#dadada" />
<rect x="706.5" y="643.5" width="14" height="14" fill="#ffffff" stroke="#808080"/>
<path d="M716,647 V654 L712,650.5 Z" fill="#777"/>
<rect x="720.5" y="643.5" width="342" height="14" fill="#ffffff" stroke="#808080"/>
<rect x="720" y="644" width="2" height="13" fill="#808080" />
<rect x="1112.5" y="643.5" width="14" height="14" fill="#ffffff" stroke="#808080"/>
<path d="M1117.5,647 V654 L1121.5,650.5 Z" fill="#777"/>
<rect x="1" y="664" width="1147" height="22" fill="#f3f2f1" />
<rect x="1" y="664" width="1147" height="1" fill="#d4d4d4" />
<text x="8.72" y="679.2" font-size="11.63" fill="#444" textLength="30.90" lengthAdjust="spacingAndGlyphs" >Ready</text>
<text x="54.95" y="679.2" font-size="11.63" fill="#444" textLength="105.11" lengthAdjust="spacingAndGlyphs" >3 of 6 records found</text>
<text x="175.65" y="679.2" font-size="11.63" fill="#444" textLength="102.77" lengthAdjust="spacingAndGlyphs" >Workbook Statistics</text>
<g fill="none" stroke="#333" stroke-width="1.05" stroke-linecap="round"><circle cx="304.9" cy="670.2" r="1.6"/><path d="M299.6,673 C298.8,671.6 299.5,670.6 301,671 C303,671.8 306.8,671.8 308.8,671 C310.3,670.6 311,671.6 310.2,673 M302.7,672.6 V677.6 C302.4,679 301.4,680 301.6,681 C301.8,681.8 302.8,681.7 303.5,681.5 M307.5,673 V675.8 M305.3,678 L308.5,681.4 L313.6,676.2"/></g>
<text x="315.98" y="679.2" font-size="11.63" fill="#444" textLength="126.51" lengthAdjust="spacingAndGlyphs" >Accessibility: Good to go</text>
<rect x="837" y="665" width="40" height="21" fill="#d4d4d4" />
<g fill="none" stroke="#444" stroke-width="1">
<rect x="850.5" y="668.5" width="12" height="12"/><path d="M854.5,668.5 V680.5 M858.5,668.5 V680.5 M850.5,672.5 H862.5 M850.5,676.5 H862.5"/>
<rect x="890.5" y="668.5" width="13" height="12"/><rect x="893.5" y="671.5" width="7" height="6"/><path d="M895,673.5 H899 M895,675.5 H899"/>
<path d="M930.5,668.5 V680.5 H943.5 V668.5 H930.5 M934.5,668.5 V674.5 H930.5 M938.5,668.5 V674.5"/>
</g>
<rect x="963" y="675" width="8" height="1" fill="#555" />
<rect x="976" y="675" width="100" height="1" fill="#888" />
<rect x="1026" y="672" width="1" height="6" fill="#555" />
<rect x="1043" y="670" width="5" height="11" fill="#707070" />
<rect x="1081" y="675" width="8" height="1" fill="#555" />
<rect x="1084.5" y="671.5" width="1" height="8" fill="#555" />
<text x="1101.45" y="679.3" font-size="12.35" fill="#444" textLength="27.94" lengthAdjust="spacingAndGlyphs" >220%</text>
<rect x="0" y="35" width="1" height="652" fill="#217346" />
<rect x="1148" y="35" width="1" height="652" fill="#217346" />
<rect x="0" y="686" width="1149" height="1" fill="#217346" />
</svg>
</body></html>
